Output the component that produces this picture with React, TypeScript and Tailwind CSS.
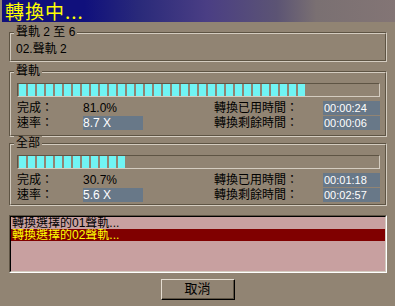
import type { ReactNode } from 'react';

function GroupBox({ label, className, children }: { label: string; className: string; children: ReactNode }) {
  return (
    <div className={`relative shrink-0 border border-[#5e5444] border-b-[#d4ccc0] border-r-[#d4ccc0] ${className}`}>
      <div className="h-full border border-[#d4ccc0] border-b-[#5e5444] border-r-[#5e5444]">{children}</div>
      <span className="absolute -top-[8px] left-[4px] px-[2px] bg-[#918473] text-[12px] leading-[14px] whitespace-pre">
        {label}
      </span>
    </div>
  );
}

function Progress({ segments }: { segments: number }) {
  return (
    <div className="ml-[6px] mr-[5px] h-[14px] flex gap-[2px] pl-[1px] border border-[#5e5444] border-b-[#d4ccc0] border-r-[#d4ccc0]">
      {Array.from({ length: segments }).map((_, i) => (
        <div key={i} className="w-[7px] h-full bg-[#70f4f4]" />
      ))}
    </div>
  );
}

function Row({ label, value, boxed, timeLabel, time }: { label: string; value: string; boxed?: boolean; timeLabel: string; time: string }) {
  return (
    <div className="flex h-[14px] items-center text-[12px] leading-[14px]">
      <span className="w-[72px] pl-[6px]">{label}</span>
      <span className={`w-[60px] h-[14px] ${boxed ? 'bg-[#687888] text-white' : ''}`}>{value}</span>
      <span className="w-[180px] pl-[71px]">{timeLabel}</span>
      <span className="w-[57px] h-[14px] bg-[#687888] text-white text-[11px] pl-[1px]">{time}</span>
    </div>
  );
}

function Section({ label, className, segments, done, speed, used, left }: {
  label: string; className: string; segments: number; done: string; speed: string; used: string; left: string;
}) {
  return (
    <GroupBox label={label} className={className}>
      <div className="pt-[10px]">
        <Progress segments={segments} />
        <div className="mt-[4px] flex flex-col gap-[1px]">
          <Row label="完成：" value={done} timeLabel="轉換已用時間：" time={used} />
          <Row label="速率：" value={speed} boxed timeLabel="轉換剩餘時間：" time={left} />
        </div>
      </div>
    </GroupBox>
  );
}

export default function App() {
  return (
    <div className="w-[395px] h-[306px] bg-[#918473] flex flex-col pl-[2px] overflow-hidden text-black font-['Liberation_Sans','Noto_Sans_CJK_TC',sans-serif]">
      <div className="h-[22px] shrink-0 flex items-center pl-[3px] overflow-hidden bg-[linear-gradient(to_right,#10107c_0%,#10107c_21%,#2a2a7a_35%,#4a3e84_52%,#5c5474_70%,#7a7072_80%,#837575_100%)]">
        <span className="text-[19px] leading-[20px] tracking-[1px] text-[#ffff00] font-['Noto_Sans_CJK_TC',sans-serif]">轉換中...</span>
      </div>

      <div className="flex flex-col pl-[7px] pr-[8px]">
        <GroupBox label="聲軌 2 至 6" className="mt-[10px] h-[30px]">
          <div className="pt-[8px] pl-[5px] text-[12px] leading-[14px]">02.聲軌 2</div>
        </GroupBox>

        <Section label="聲軌" className="mt-[9px] h-[66px]" segments={32} done="81.0%" speed="8.7 X" used="00:00:24" left="00:00:06" />
        <Section label="全部" className="mt-[6px] h-[63px]" segments={12} done="30.7%" speed="5.6 X" used="00:01:18" left="00:02:57" />

        <div className="mt-[9px] h-[58px] shrink-0 border border-[#5e5444] border-b-white border-r-white">
          <div className="h-full border border-black border-b-[#d4ccc0] border-r-[#d4ccc0] bg-[#c8a0a0] text-[12px] leading-[12px]">
            <div className="h-[12px] pl-[1px] flex items-center overflow-hidden">轉換選擇的01聲軌...</div>
            <div className="h-[12px] pl-[1px] flex items-center overflow-hidden bg-[#800000] text-[#ffff00]">轉換選擇的02聲軌...</div>
          </div>
        </div>

        <button className="mt-[6px] self-center w-[74px] h-[21px] shrink-0 border border-[#e4dcd0] border-b-black border-r-black">
          <div className="h-full flex items-center justify-center border-b border-r border-[#5e5444] text-[13px]">取消</div>
        </button>
      </div>
    </div>
  );
}
